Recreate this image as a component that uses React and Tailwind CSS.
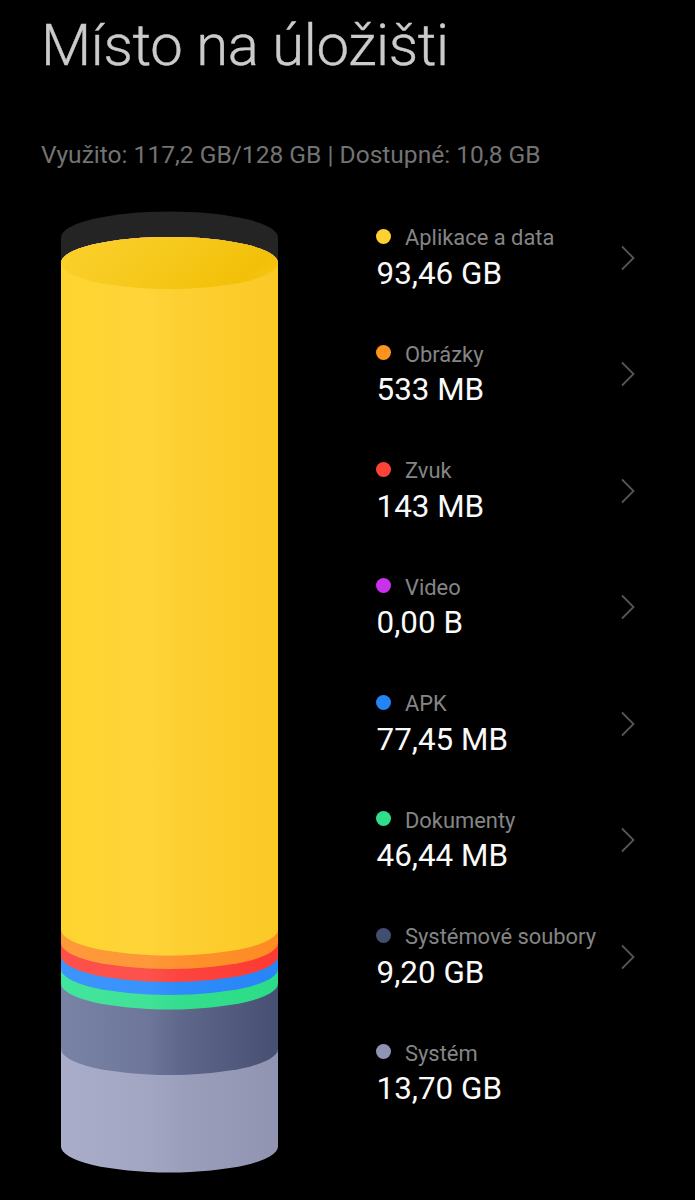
const categories = [
  { name: 'Aplikace a data', size: '93,46 GB', dot: 'bg-[#fed130]', link: true },
  { name: 'Obrázky', size: '533 MB', dot: 'bg-[#fe9320]', link: true },
  { name: 'Zvuk', size: '143 MB', dot: 'bg-[#fd4338]', link: true },
  { name: 'Video', size: '0,00 B', dot: 'bg-[#ca31ec]', link: true },
  { name: 'APK', size: '77,45 MB', dot: 'bg-[#2484f6]', link: true },
  { name: 'Dokumenty', size: '46,44 MB', dot: 'bg-[#2fdd8b]', link: true },
  { name: 'Systémové soubory', size: '9,20 GB', dot: 'bg-[#414e70]', link: true },
  { name: 'Systém', size: '13,70 GB', dot: 'bg-[#8f94b4]', link: false },
]

// Painted bottom-up: every layer overlaps the one below it, `bottom` is its lowest point
const layers = [
  { id: 'system', bottom: 961.5, colors: ['#a9adc9', '#a3a6c3', '#9b9fbb', '#9094b0'] },
  { id: 'systemFiles', bottom: 864, colors: ['#7883a6', '#6e7799', '#5f688b', '#475073'] },
  { id: 'docs', bottom: 798.5, colors: ['#41e59b', '#40e297', '#33de8d', '#2bdc86'] },
  { id: 'apk', bottom: 784, colors: ['#3b95fc', '#3993fc', '#2d8bfa', '#2785f8'] },
  { id: 'audio', bottom: 771, colors: ['#fd504a', '#fd514b', '#fd443e', '#fc3a32'] },
  { id: 'images', bottom: 758, colors: ['#fe9a3a', '#fe983a', '#fe912e', '#fd8c22'] },
  { id: 'apps', bottom: 744.5, colors: ['#fed52f', '#fed439', '#fdcf31', '#fbc926'] },
]

function StorageCylinder() {
  return (
    <svg viewBox="0 0 217 970" className="ml-[61px] h-[970px] w-[217px] shrink-0">
      <defs>
        {layers.map((layer) => (
          <linearGradient key={layer.id} id={layer.id} gradientUnits="userSpaceOnUse" x1="0" y1="0" x2="217" y2="0">
            <stop offset="0" stopColor={layer.colors[0]} />
            <stop offset="0.4" stopColor={layer.colors[1]} />
            <stop offset="0.55" stopColor={layer.colors[2]} />
            <stop offset="1" stopColor={layer.colors[3]} />
          </linearGradient>
        ))}
        <linearGradient id="lid" x1="0" y1="0.3" x2="1" y2="0.6">
          <stop offset="0" stopColor="#fad02b" />
          <stop offset="0.5" stopColor="#f6c81b" />
          <stop offset="0.9" stopColor="#f2c008" />
          <stop offset="1" stopColor="#f4c410" />
        </linearGradient>
      </defs>

      {/* Free space */}
      <path d="M0 26.5A108.5 26 0 0 1 217 26.5V60H0Z" fill="#242424" />

      {layers.map((layer) => (
        <path
          key={layer.id}
          d={`M0 52V${layer.bottom - 26}A108.5 26 0 0 0 217 ${layer.bottom - 26}V52A108.5 26 0 0 0 0 52Z`}
          fill={`url(#${layer.id})`}
        />
      ))}
      <ellipse cx="108.5" cy="52" rx="108.5" ry="26" fill="url(#lid)" />
    </svg>
  )
}

function Category({ name, size, dot, link }) {
  return (
    <li className="flex h-[116.5px] items-start justify-between">
      <div>
        <div className="flex h-[26px] items-center">
          <span className={`size-[15px] rounded-full ${dot}`} />
          <span className="ml-[14px] mt-[3.4px] whitespace-nowrap text-[21.9px] leading-[26px] text-[#858585]">{name}</span>
        </div>
        <p className="ml-[0.5px] mt-[6.6px] text-[31.4px] leading-[36px] text-[#fafafa]">{size}</p>
      </div>
      {link && (
        <svg viewBox="0 0 16 26" className="mt-[21.3px] h-[26px] w-4" fill="none" stroke="#565656" strokeWidth="1.8">
          <path d="M2 1.5L13.5 13L2 24.5" />
        </svg>
      )}
    </li>
  )
}

export default function App() {
  return (
    <main className="h-[1200px] w-[695px] overflow-hidden bg-black font-[Roboto,sans-serif]">
      <h1 className="ml-[41px] pt-[11px] text-[58px] font-light leading-[68px] tracking-[-0.35px] text-[#cbcbcb] [-webkit-text-stroke:0.4px_#cbcbcb]">
        Místo na úložišti
      </h1>
      <p className="ml-[41px] mt-[61px] text-[24.55px] leading-[29px] text-[#737373]">
        Využito: 117,2 GB/128 GB | Dostupné: 10,8 GB
      </p>
      <div className="mt-[42px] flex">
        <StorageCylinder />
        <ul className="ml-[98px] mt-[12.3px] w-[260px]">
          {categories.map((category) => (
            <Category key={category.name} {...category} />
          ))}
        </ul>
      </div>
    </main>
  )
}
